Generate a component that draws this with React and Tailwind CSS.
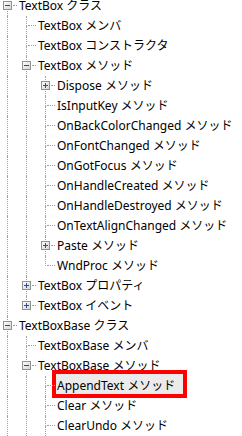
import React from "react";

const rows = [
  { lvl: 0, label: "TextBox クラス", exp: "minus" },
  { lvl: 1, label: "TextBox メンバ" },
  { lvl: 1, label: "TextBox コンストラクタ" },
  { lvl: 1, label: "TextBox メソッド", exp: "minus" },
  { lvl: 2, label: "Dispose メソッド", exp: "plus" },
  { lvl: 2, label: "IsInputKey メソッド" },
  { lvl: 2, label: "OnBackColorChanged メソッド" },
  { lvl: 2, label: "OnFontChanged メソッド" },
  { lvl: 2, label: "OnGotFocus メソッド" },
  { lvl: 2, label: "OnHandleCreated メソッド" },
  { lvl: 2, label: "OnHandleDestroyed メソッド" },
  { lvl: 2, label: "OnTextAlignChanged メソッド" },
  { lvl: 2, label: "Paste メソッド", exp: "plus" },
  { lvl: 2, label: "WndProc メソッド" },
  { lvl: 1, label: "TextBox プロパティ", exp: "plus" },
  { lvl: 1, label: "TextBox イベント", exp: "plus" },
  { lvl: 0, label: "TextBoxBase クラス", exp: "minus" },
  { lvl: 1, label: "TextBoxBase メンバ" },
  { lvl: 1, label: "TextBoxBase メソッド", exp: "minus" },
  { lvl: 2, label: "AppendText メソッド", sel: true },
  { lvl: 2, label: "Clear メソッド" },
  { lvl: 2, label: "ClearUndo メソッド" },
];

// does the guide line of column k continue below row r?
function continues(r, k) {
  for (let i = r + 1; i < rows.length; i++) {
    if (rows[i].lvl === k) return true;
    if (rows[i].lvl < k) return false;
  }
  return true;
}

function Expander({ type }) {
  const sign = type === "plus" ? "#27509b" : "#3b4a60";
  return (
    <svg width="9" height="9" viewBox="0 0 9 9" className="absolute left-[3px] top-[5px]">
      <defs>
        <linearGradient id="eg" x1="0" y1="0" x2="1" y2="1">
          <stop offset="0" stopColor="#ffffff" />
          <stop offset="1" stopColor="#d4d4d4" />
        </linearGradient>
      </defs>
      <rect x="0.5" y="0.5" width="8" height="8" fill="url(#eg)" stroke="#919191" />
      <path d="M2 4.5h5" stroke={sign} strokeWidth="1" />
      {type === "plus" && <path d="M4.5 2v5" stroke={sign} strokeWidth="1" />}
    </svg>
  );
}

function GuideCell({ own, cont, first, exp }) {
  return (
    <div className="relative w-[19px] shrink-0">
      {own ? (
        <>
          {!first && (
            <div className="absolute left-[7px] top-0 h-[10px] border-l border-dotted border-[#a0a0a0]" />
          )}
          {cont && (
            <div className="absolute left-[7px] top-[10px] bottom-0 border-l border-dotted border-[#a0a0a0]" />
          )}
          <div
            className={
              exp
                ? "absolute left-[13px] top-[9px] w-[4px] border-t border-dotted border-[#a0a0a0]"
                : "absolute left-[9px] top-[9px] w-[8px] border-t border-dotted border-[#a0a0a0]"
            }
          />
          {exp && <Expander type={exp} />}
        </>
      ) : (
        cont && <div className="absolute left-[7px] top-0 bottom-0 border-l border-dotted border-[#a0a0a0]" />
      )}
    </div>
  );
}

function Row({ row, idx }) {
  const levels = Array.from({ length: row.lvl + 1 }, (_, k) => k);
  return (
    <div className="flex h-5">
      {levels.map((k) => (
        <GuideCell key={k} own={k === row.lvl} cont={continues(idx, k)} first={idx === 0} exp={row.exp} />
      ))}
      {row.sel ? (
        <div className="-ml-px -mt-[2px] flex h-5 items-center pl-px pr-[8px] pt-[4px] bg-[#ebebeb] outline-4 outline-solid outline-[#ff0000]">
          {row.label}
        </div>
      ) : (
        <div className="-ml-px flex items-center pl-px pr-[8px]">
          <span className="leading-3">{row.label}</span>
        </div>
      )}
    </div>
  );
}

export default function App() {
  return (
    <div className="w-[242px] h-[436px] overflow-hidden bg-white text-black text-[12px] font-['Noto_Sans','Noto_Sans_CJK_JP',sans-serif]">
      <div className="-mt-[4px] flex flex-col whitespace-nowrap">
        {rows.map((r, i) => (
          <Row key={i} row={r} idx={i} />
        ))}
      </div>
    </div>
  );
}
